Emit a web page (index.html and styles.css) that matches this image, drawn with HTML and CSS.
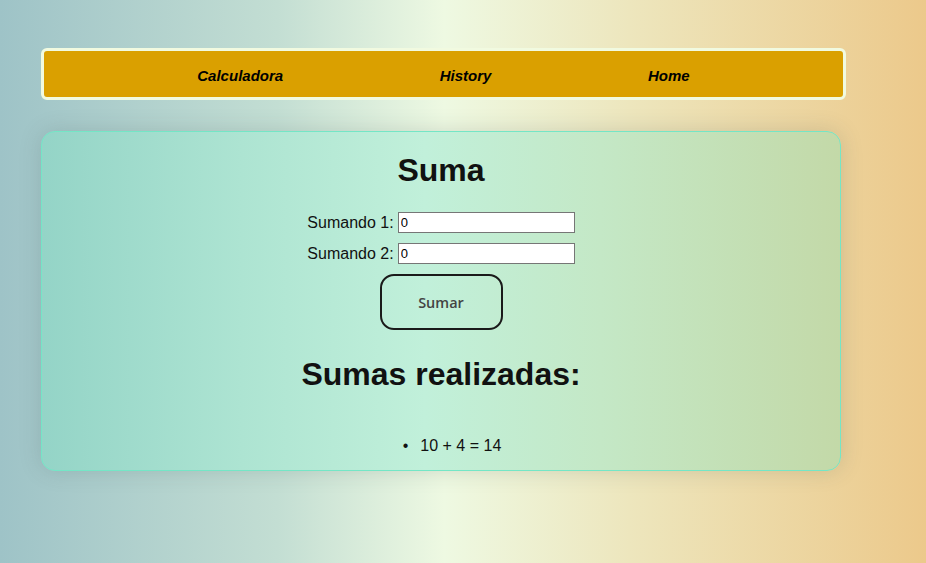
FILE: index.html
```html
<!DOCTYPE html>
<html lang="es">
<head>
<meta charset="utf-8">
<title>Calculadora</title>
<link rel="stylesheet" href="styles.css">
</head>
<body>
<div class="page">
  <nav class="nav">
    <ul class="nav-list">
      <li><a href="#">Calculadora</a></li>
      <li><a href="#">History</a></li>
      <li><a href="#">Home</a></li>
    </ul>
  </nav>
  <main class="card">
    <h1 class="title">Suma</h1>
    <form class="form">
      <div class="row"><label>Sumando 1: <input type="text" value="0"></label></div>
      <div class="row"><label>Sumando 2: <input type="text" value="0"></label></div>
      <div class="row"><button type="button" class="btn">Sumar</button></div>
    </form>
    <h2 class="subtitle">Sumas realizadas:</h2>
    <ul class="results">
      <li>10 + 4 = 14</li>
    </ul>
  </main>
</div>
</body>
</html>
```
FILE: styles.css
```css
html {
  min-height: 100%;
  background: linear-gradient(to right, #9ec3c7 0%, #c3ded3 30%, #eef9e2 48%, #ede6bd 68%, #ecc98b 100%);
}
body {
  margin: 0;
  min-height: 563px;
  font-family: "Liberation Sans", Arial, sans-serif;
  color: #111;
}
.page {
  padding: 48px 0 0 41px;
}
.nav {
  box-sizing: border-box;
  width: 805px;
  height: 52px;
  padding-top: 3px;
  background: #daa000;
  border: 3px solid #f1fae0;
  border-radius: 6px;
  display: flex;
  align-items: center;
}
.nav-list {
  list-style: none;
  margin: 0;
  padding: 0 75px;
  flex: 1;
  display: flex;
  justify-content: space-around;
}
.nav-list a {
  color: #000;
  text-decoration: none;
  font-style: italic;
  font-weight: bold;
  font-size: 15px;
}
.card {
  box-sizing: border-box;
  width: 800px;
  height: 340px;
  margin-top: 31px;
  border: 1px solid #74e6c6;
  border-radius: 14px;
  background: linear-gradient(to right, #94d4c7 0%, #ade4d2 25%, #c1f0da 48%, #c4e8c6 70%, #c3d9a8 100%);
  box-shadow: 0 0 22px rgba(60, 80, 80, 0.18);
  text-align: center;
}
.title {
  margin: 20px 0 0;
  font-size: 32px;
  font-weight: bold;
  line-height: 37px;
}
.form {
  margin-top: 23px;
  display: flex;
  flex-direction: column;
  align-items: center;
  gap: 10px;
}
.row {
  display: flex;
  justify-content: center;
  align-items: center;
  font-size: 16px;
  height: 21px;
}
.row label {
  display: flex;
  align-items: center;
  gap: 4px;
}
.row input {
  box-sizing: border-box;
  width: 177px;
  height: 21px;
  border: 1px solid #767676;
  padding: 1px 2px;
  font-family: "Liberation Sans", Arial, sans-serif;
  font-size: 13px;
  background: #fff;
  color: #000;
}
.row:last-child {
  height: 56px;
}
.btn {
  box-sizing: border-box;
  width: 123px;
  height: 56px;
  border: 2px solid #1a1a1a;
  border-radius: 14px;
  background: transparent;
  font-family: "Open Sans", "Noto Sans", sans-serif;
  font-size: 14.5px;
  font-weight: 600;
  color: #444;
  padding-top: 2px;
  cursor: pointer;
}
.subtitle {
  margin: 26px 0 0;
  font-size: 32px;
  font-weight: bold;
  line-height: 37px;
}
.results {
  margin: 43px 0 0;
  padding-left: 40px;
  list-style: none;
  font-size: 16px;
  line-height: 19px;
}
.results li::before {
  content: "\2022";
  margin-left: -18px;
  margin-right: 12px;
}
```
